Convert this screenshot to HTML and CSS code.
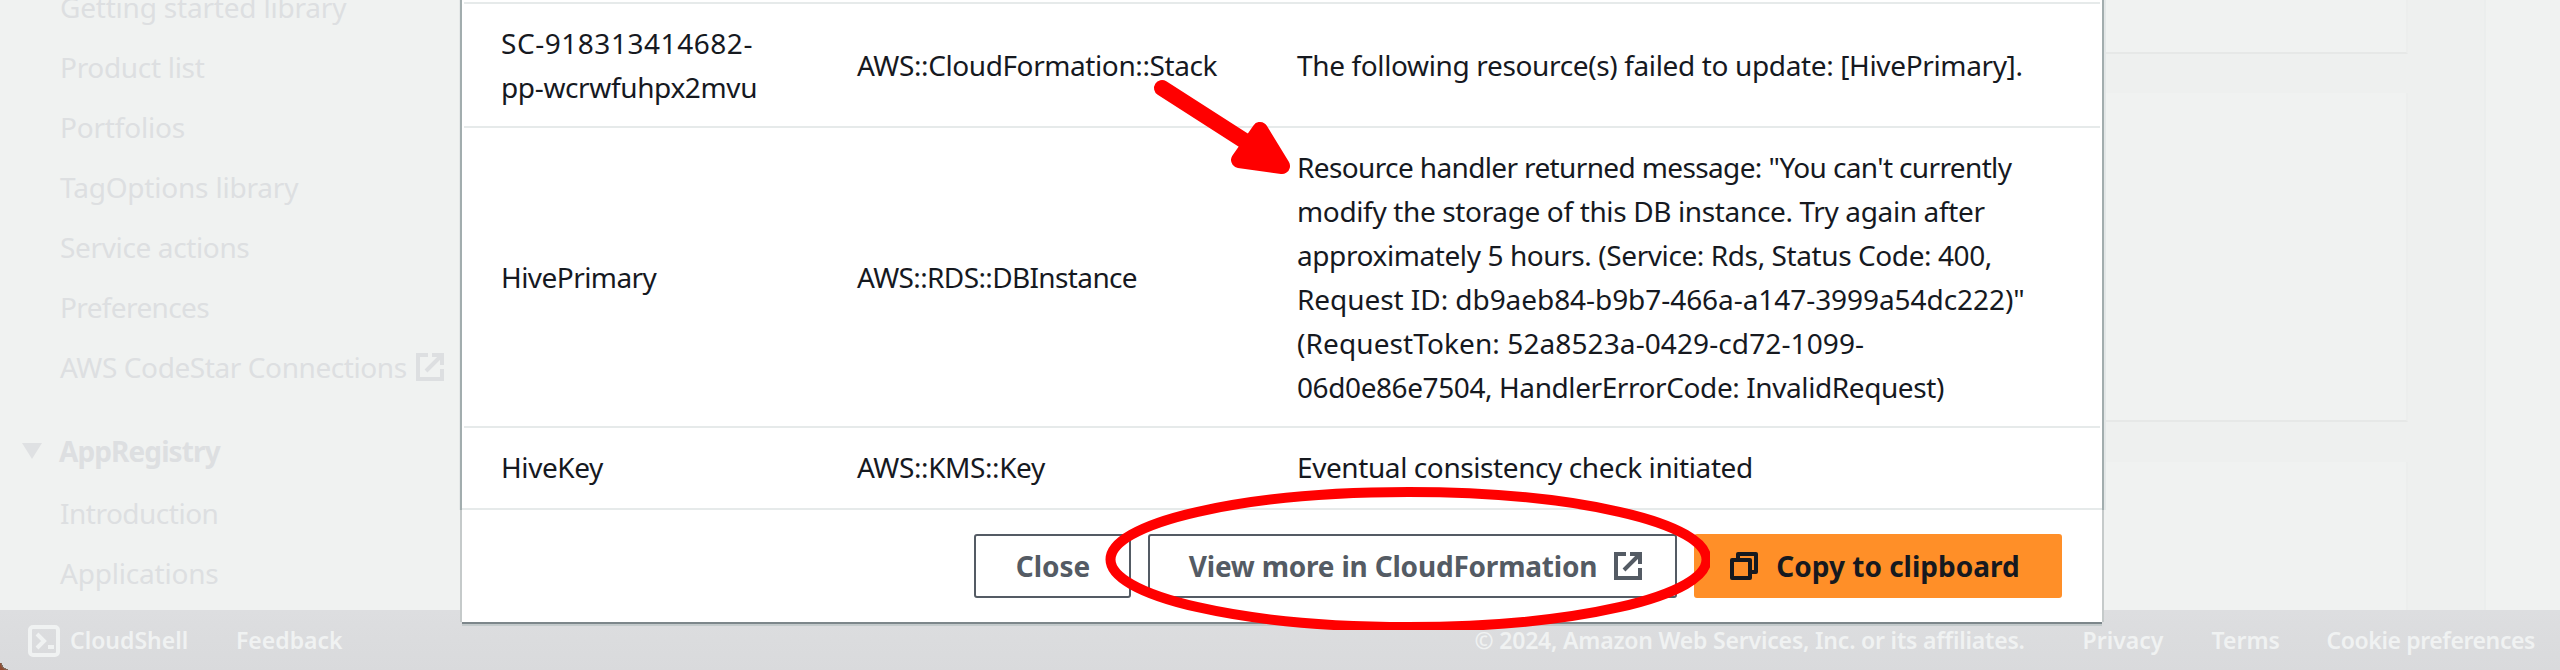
FILE: index.html
```
<!DOCTYPE html>
<html lang="en">
<head>
<meta charset="utf-8">
<title>Service Catalog - Provisioned product events</title>
<link rel="stylesheet" href="styles.css">
</head>
<body>
<svg class="defs" width="0" height="0">
  <symbol id="external" viewBox="0 0 28 28">
    <path d="M12 2H2v24h24V16M16 2h10v10M25 3 10 18" fill="none" stroke="currentColor" stroke-width="4"/>
  </symbol>
  <symbol id="copy" viewBox="0 0 28 28">
    <path d="M2 8h18v18H2zM8 8V2h18v18h-6" fill="none" stroke="currentColor" stroke-width="4" stroke-linejoin="round"/>
  </symbol>
  <symbol id="shell" viewBox="0 0 32 32">
    <rect x="2" y="2" width="28" height="28" rx="3" fill="none" stroke="currentColor" stroke-width="4"/>
    <path d="m9 9 7 7-7 7M20 22h6" fill="none" stroke="currentColor" stroke-width="4"/>
  </symbol>
</svg>
<div class="page">
  <div class="content">
    <nav class="sidebar">
      <ul class="nav-list nav-first">
        <li class="tr-20">Getting started library</li>
        <li class="tr-30">Product list</li>
        <li class="tr-20">Portfolios</li>
        <li class="tr-20">TagOptions library</li>
        <li class="tr-35">Service actions</li>
        <li class="tr-65">Preferences</li>
        <li><span class="tr-40">AWS CodeStar Connections</span><svg class="icon nav-icon"><use href="#external"/></svg></li>
      </ul>
      <div class="nav-heading"><span class="caret"></span><span class="tr-90">AppRegistry</span></div>
      <ul class="nav-list">
        <li class="tr-50">Introduction</li>
        <li class="tr-20">Applications</li>
      </ul>
    </nav>
    <main class="main">
      <section class="card card-top"></section>
      <section class="card card-middle"></section>
      <section class="card card-last"></section>
    </main>
    <aside class="rail"></aside>
  </div>
  <footer class="footer">
    <svg class="shell-icon"><use href="#shell"/></svg>
    <span class="shell-label">CloudShell</span>
    <span>Feedback</span>
    <span class="copyright tr-20">© 2024, Amazon Web Services, Inc. or its affiliates.</span>
    <span class="privacy">Privacy</span>
    <span class="terms">Terms</span>
    <span class="tr-40">Cookie preferences</span>
  </footer>
  <span class="window-corner"></span>

  <div class="modal">
    <div class="modal-body">
      <div class="row row-stack">
        <div><p class="tr+55">SC-918313414682-</p><p class="tr-35">pp-wcrwfuhpx2mvu</p></div>
        <div><p class="tr-40">AWS::CloudFormation::Stack</p></div>
        <div><p class="tr-35">The following resource(s) failed to update: [HivePrimary].</p></div>
      </div>
      <div class="row row-db">
        <div><p class="tr-55">HivePrimary</p></div>
        <div><p class="tr-65">AWS::RDS::DBInstance</p></div>
        <div>
          <p class="tr-65">Resource handler returned message: "You can't currently</p>
          <p class="tr-35">modify the storage of this DB instance. Try again after</p>
          <p class="tr-40">approximately 5 hours. (Service: Rds, Status Code: 400,</p>
          <p class="tr-05">Request ID: db9aeb84-b9b7-466a-a147-3999a54dc222)"</p>
          <p class="tr+10">(RequestToken: 52a8523a-0429-cd72-1099-</p>
          <p class="tr-40">06d0e86e7504, HandlerErrorCode: InvalidRequest)</p>
        </div>
      </div>
      <div class="row row-key">
        <div><p class="tr-40">HiveKey</p></div>
        <div><p class="tr-40">AWS::KMS::Key</p></div>
        <div><p class="tr-40">Eventual consistency check initiated</p></div>
      </div>
    </div>
    <div class="modal-footer">
      <button class="btn btn-close">Close</button>
      <button class="btn btn-view"><span class="tr-20">View more in CloudFormation</span><svg class="icon"><use href="#external"/></svg></button>
      <button class="btn btn-copy"><svg class="icon"><use href="#copy"/></svg><span>Copy to clipboard</span></button>
    </div>
  </div>

  <svg class="arrow" width="150" height="110" viewBox="0 0 150 110">
    <g stroke="#f00" fill="#f00" stroke-width="16" stroke-linejoin="round" stroke-linecap="round">
      <path d="M12 18 104 77"/>
      <path d="m110 60 22 36-43-6z"/>
    </g>
  </svg>
  <svg class="ring" width="605" height="143" viewBox="0 0 605 143">
    <ellipse cx="303.500" cy="72.500" rx="298" ry="67.500" fill="none" stroke="#f00" stroke-width="10"/>
  </svg>
</div>
</body>
</html>
```
FILE: styles.css
```
* { box-sizing: border-box; }
body { margin: 0; }
p, ul { margin: 0; padding: 0; }
.defs { position: absolute; }

.page {
  position: relative;
  display: flex;
  flex-direction: column;
  width: 2560px;
  height: 670px;
  overflow: hidden;
  background: #f0f2f1;
  font: 28px/44px "Noto Sans", "Open Sans", sans-serif;
  color: #16191f;
}
.icon { width: 28px; height: 28px; flex: none; }

/* letter tracking, hundredths of a pixel */
.tr-05 { letter-spacing: -0.06px; }
.tr-20 { letter-spacing: -0.2px; }
.tr-30 { letter-spacing: -0.31px; }
.tr-35 { letter-spacing: -0.36px; }
.tr-40 { letter-spacing: -0.41px; }
.tr-50 { letter-spacing: -0.5px; }
.tr-55 { letter-spacing: -0.56px; }
.tr-65 { letter-spacing: -0.63px; }
.tr-90 { letter-spacing: -0.9px; }
.tr\+10 { letter-spacing: 0.1px; }
.tr\+55 { letter-spacing: 0.54px; }

/* page behind the dialog */
.content { display: flex; height: 610px; overflow: hidden; }
.sidebar { width: 462px; color: #dddfe1; line-height: 60px; background: #f0f2f1; }
.nav-list { list-style: none; padding-left: 60px; white-space: nowrap; }
.nav-list li { display: flex; align-items: center; height: 60px; }
.nav-first { margin-top: -23px; }
.nav-icon { margin-left: 9px; margin-bottom: 1px; }
.nav-heading { display: flex; align-items: center; height: 60px; margin: 24px 0 2px; padding-left: 22px; font-weight: 700; }
.caret { width: 20px; height: 16px; margin-right: 17px; background: #dfe1e3; clip-path: polygon(0 0, 100% 0, 50% 100%); }

.main { flex: 1; padding-right: 76px; background: #eef0ef; border-right: 2px solid #ebeeed; }
.card { background: #f0f2f1; border-right: 2px solid #eceeed; border-bottom: 2px solid #e6e8e7; }
.card-top { height: 54px; }
.card-middle { height: 329px; margin: 39px 0 40px; }
.card-last { height: 160px; }
.rail { width: 74px; }

.footer {
  display: flex;
  align-items: center;
  height: 60px;
  padding: 0 25px 0 28px;
  background: linear-gradient(#dddee0, #d9dadc);
  color: #f0f2f2;
  font-size: 23px;
  font-weight: 600;
  line-height: 60px;
  white-space: nowrap;
}
.shell-icon { width: 32px; height: 32px; margin: 2px 10px 0 0; }
.shell-label { width: 166px; }
.copyright { margin-left: auto; width: 608px; }
.privacy { width: 129px; }
.terms { width: 115px; }
.window-corner {
  position: absolute;
  left: 0;
  bottom: 0;
  width: 8px;
  height: 7px;
  background: radial-gradient(circle at 100% 0, transparent 6px, #7c7468 6px, #8f4a2f 8px);
}

/* dialog */
.modal { position: absolute; left: 462px; top: 0; width: 1640px; height: 622px; }
.modal-body {
  height: 510px;
  padding: 2px 2px 0;
  background: #fff;
  border-bottom: 2px solid #e6eaea;
  box-shadow: -2px 0 #a2adae, 2px 0 #a2adae, 4px 0 #e3e7e7, -3px 0 #e6e9e9;
}
.row {
  display: grid;
  grid-template-columns: 356px 440px 1fr;
  align-items: center;
  padding-left: 37px;
  border-top: 2px solid #e6eaea;
  white-space: nowrap;
}
.row-stack { height: 124px; }
.row-db { height: 300px; }
.row-key { height: 80px; }
.modal-footer {
  display: flex;
  justify-content: flex-end;
  gap: 17px;
  height: 112px;
  padding: 24px 40px 24px 0;
  background: #fff;
  box-shadow: -2px 0 #c5caca, 2px 0 #c5caca, 0 2px #7d878b, 0 4px #c3cacb;
}
.btn {
  display: flex;
  align-items: center;
  justify-content: center;
  height: 64px;
  padding: 0;
  border: 2px solid #545b64;
  border-radius: 3px;
  background: #fff;
  color: #545b64;
  font: inherit;
  font-weight: 700;
  white-space: nowrap;
}
.btn-close { width: 157px; padding-left: 1px; }
.btn-view { width: 529px; gap: 17px; padding-left: 6px; }
.btn-copy { width: 368px; gap: 18px; border-color: #ff8f28; background: #ff8f28; color: #16191f; padding-right: 6px; }

/* annotations */
.arrow { position: absolute; left: 1150px; top: 70px; }
.ring { position: absolute; left: 1105px; top: 487px; }
```
